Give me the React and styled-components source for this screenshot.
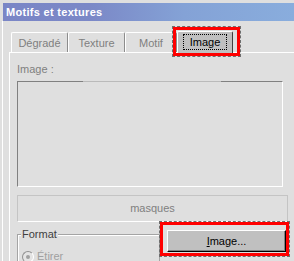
import styled, { createGlobalStyle } from "styled-components";

const GlobalStyle = createGlobalStyle`
    * {
        box-sizing: border-box;
    }
    html, body {
        margin: 0;
        background: #dfdfdf;
    }
    body {
        font-family: "Liberation Sans", Arial, sans-serif;
        font-size: 11px;
    }
`;

const Frame = styled.div`
    width: 294px;
    height: 261px;
    overflow: hidden;
    background: #dfdfdf;
    padding-top: 3px;
`;

const TitleBar = styled.div`
    margin-left: 3px;
    height: 18px;
    line-height: 18px;
    padding-left: 3px;
    color: #fff;
    font-weight: bold;
    letter-spacing: 0.3px;
    white-space: nowrap;
    background: linear-gradient(90deg, #7a86c6 0%, #7b88c7 30%, #84a2d6 62%, #89addd 100%);
`;

const Body = styled.div`
    margin-left: 2px;
    border-left: 1px solid #fff;
    padding: 10px 0 0 6px;
    height: 240px;
`;

const TabRow = styled.div`
    display: flex;
    align-items: flex-end;
    height: 21px;
    margin-left: 2px;
    position: relative;
    z-index: 1;
`;

const Tab = styled.div`
    position: relative;
    width: ${(p) => p.$w}px;
    height: ${(p) => (p.$active ? 22 : 20)}px;
    margin-bottom: ${(p) => (p.$active ? -1 : 0)}px;
    display: flex;
    justify-content: center;
    align-items: flex-start;
    padding-top: ${(p) => (p.$active ? 2 : 4)}px;
    border-top: 1px solid #fff;
    border-left: 1px solid #fff;
    border-right: 1px solid ${(p) => (p.$active ? "#404040" : "#8c8c8c")};
    border-radius: 2px 2px 0 0;
    background: ${(p) => (p.$active ? "#c0c0c0" : "#dfdfdf")};
    color: ${(p) => (p.$active ? "#000" : "#808080")};
    line-height: 13px;
    white-space: nowrap;
`;

const FocusRing = styled.span`
    border: 1px dotted #000;
    padding: 0 6px;
    line-height: 14px;
`;

// red highlight drawn over a control, inset values relative to its padding box
const Annotation = styled.span`
    position: absolute;
    top: ${(p) => p.$t}px;
    right: ${(p) => p.$r}px;
    bottom: ${(p) => p.$b}px;
    left: ${(p) => p.$l}px;
    border: 3px solid #ff0000;
    outline: 1px dashed #6e6e6e;
    pointer-events: none;
    z-index: 2;
`;

const Panel = styled.div`
    width: 300px;
    height: 220px;
    border-top: 1px solid #fff;
    border-left: 1px solid #fff;
    padding: 10px 0 0 7px;
    display: flex;
    flex-direction: column;
    align-items: flex-start;
`;

const FieldLabel = styled.div`
    color: #808080;
    line-height: 13px;
`;

const Preview = styled.div`
    position: relative;
    width: 266px;
    height: 109px;
    margin-top: 5px;
    border: 1px solid;
    border-color: #808080 #fff #fff #808080;

    &::before {
        content: "";
        position: absolute;
        top: -1px;
        left: 65px;
        right: 61px;
        height: 1px;
        background: #bababa;
    }
`;

const MaskBox = styled.div`
    width: 271px;
    height: 27px;
    margin-top: 8px;
    border: 1px solid #c4c4c4;
    border-bottom-color: #fff;
    color: #808080;
    line-height: 25px;
    text-align: center;
`;

const BottomRow = styled.div`
    display: flex;
    align-items: flex-start;
    gap: 7px;
    margin-top: 6px;
`;

const GroupBox = styled.fieldset`
    width: 143px;
    height: 44px;
    min-width: 0;
    margin: 0;
    padding: 0 0 0 3px;
    border: 1px solid #a4a4a4;
    box-shadow: inset 1px 1px 0 #fff;
`;

const Legend = styled.legend`
    padding: 0 1px;
    line-height: 13px;
    color: #404040;
    background: #dfdfdf;
`;

const RadioRow = styled.div`
    display: flex;
    align-items: center;
    gap: 3px;
    margin: 9px 0 0 1px;
    color: #a0a0a0;
    line-height: 13px;
`;

const Radio = styled.span`
    position: relative;
    width: 12px;
    height: 12px;
    border-radius: 50%;
    border: 1px solid;
    border-color: #909090 #fff #fff #909090;
    background: #e4e4e4;

    &::after {
        content: "";
        position: absolute;
        left: 3px;
        top: 3px;
        width: 4px;
        height: 4px;
        border-radius: 50%;
        background: #a0a0a0;
    }
`;

const Button = styled.button`
    position: relative;
    width: 119px;
    height: 22px;
    margin-top: 2px;
    padding: 0;
    font: inherit;
    line-height: 19px;
    color: #000;
    background: #c0c0c0;
    border: 1px solid;
    border-color: #fff #000 #000 #fff;
    box-shadow: inset -1px -1px 0 #808080;
`;

const tabs = [
    { label: "Dégradé", w: 57 },
    { label: "Texture", w: 57 },
    { label: "Motif", w: 52 },
];

export default function App() {
    return (
        <Frame>
            <GlobalStyle />
            <TitleBar>Motifs et textures</TitleBar>
            <Body>
                <TabRow>
                    {tabs.map((t) => (
                        <Tab key={t.label} $w={t.w}>{t.label}</Tab>
                    ))}
                    <Tab $w={56} $active>
                        <FocusRing>Image</FocusRing>
                        <Annotation $t={-5} $r={-8} $b={-3} $l={-5} />
                    </Tab>
                </TabRow>
                <Panel>
                    <FieldLabel>Image :</FieldLabel>
                    <Preview />
                    <MaskBox>masques</MaskBox>
                    <BottomRow>
                        <GroupBox>
                            <Legend>Format</Legend>
                            <RadioRow>
                                <Radio />
                                Étirer
                            </RadioRow>
                        </GroupBox>
                        <Button>
                            <u>I</u>mage...
                            <Annotation $t={-9} $r={-4} $b={-5} $l={-8} />
                        </Button>
                    </BottomRow>
                </Panel>
            </Body>
        </Frame>
    );
}
